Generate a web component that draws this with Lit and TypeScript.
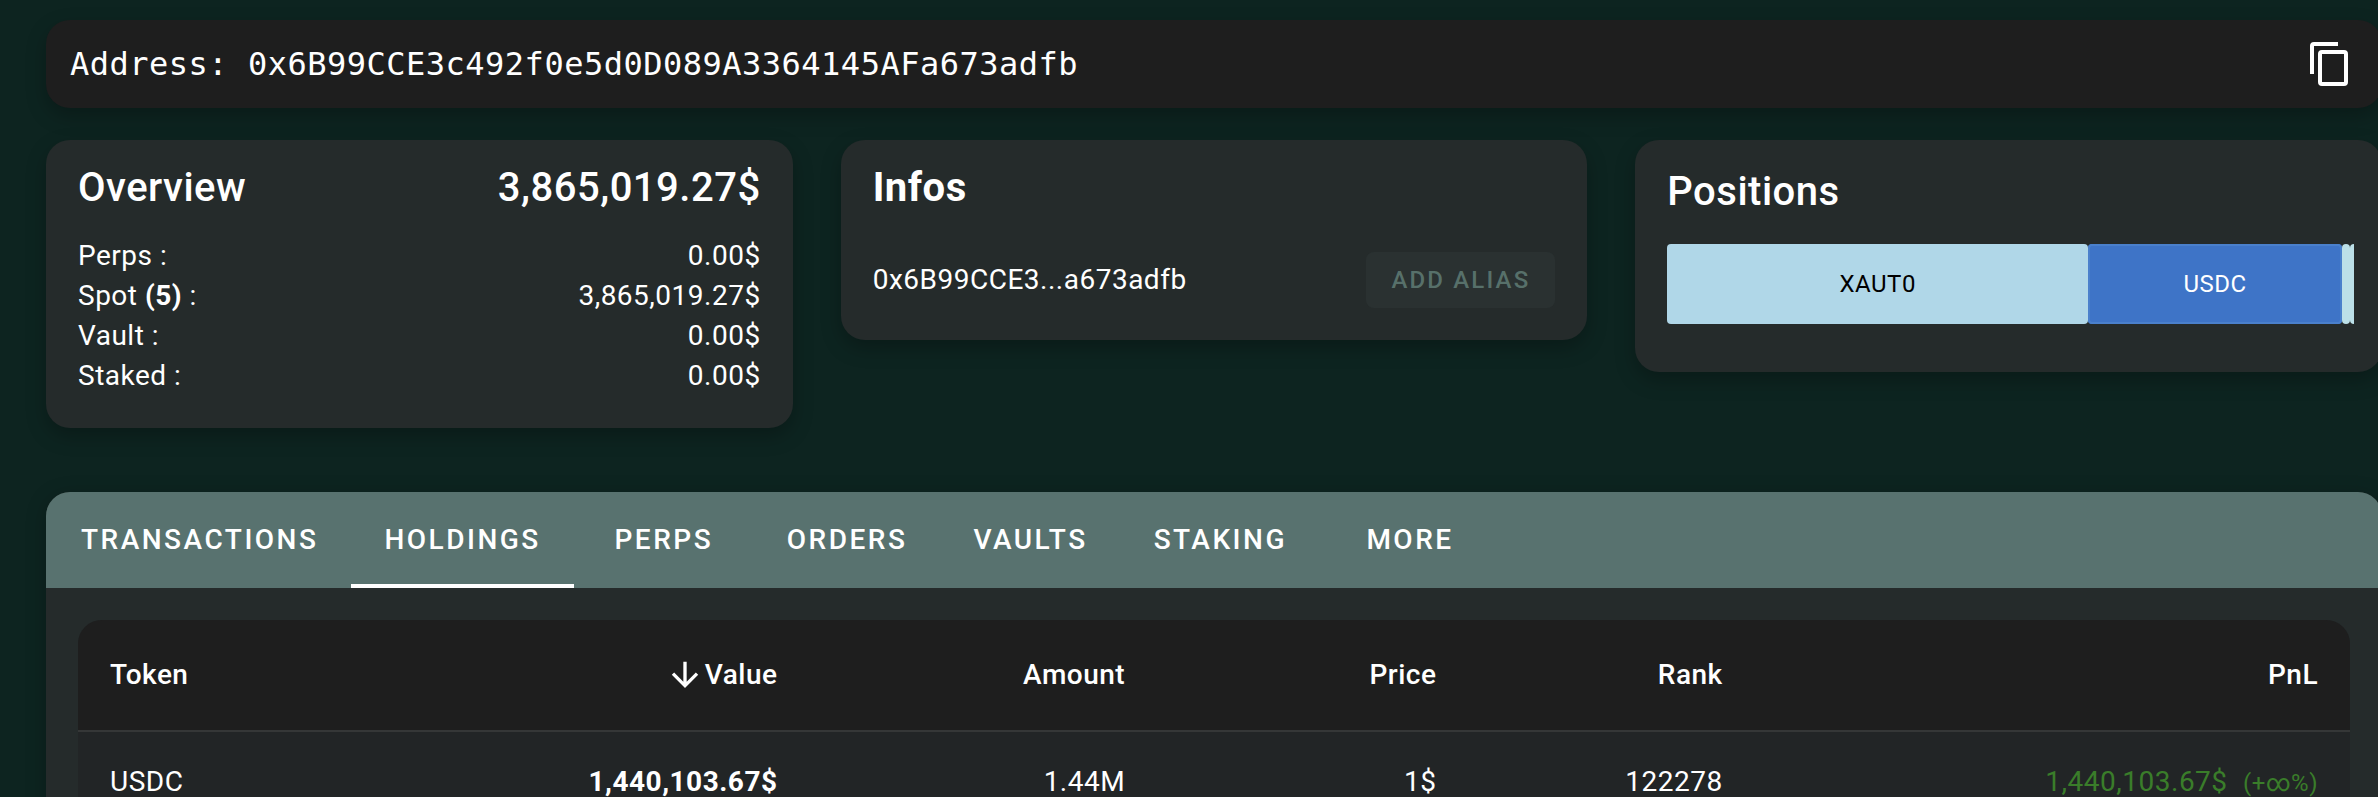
import { LitElement, html, css, svg } from "lit";
import { customElement, state } from "lit/decorators.js";
import { classMap } from "lit/directives/class-map.js";
import { styleMap } from "lit/directives/style-map.js";

const ADDRESS = "0x6B99CCE3c492f0e5d0D089A3364145AFa673adfb";

const TABS = ["Transactions", "Holdings", "Perps", "Orders", "Vaults", "Staking", "More"];

const POSITIONS = [
  { name: "XAUT0", share: 421, tone: "sky" },
  { name: "USDC", share: 254, tone: "blue" },
  { name: "", share: 8, tone: "mint" },
  { name: "", share: 4, tone: "mint last" },
];

const copyIcon = svg`<path d="M19,21H8V7H19M19,5H8A2,2 0 0,0 6,7V21A2,2 0 0,0 8,23H19A2,2 0 0,0 21,21V7A2,2 0 0,0 19,5M16,1H4A2,2 0 0,0 2,3V17H4V3H16V1Z" fill="currentColor"/>`;
const arrowIcon = svg`<path d="M11,4H13V16L18.5,10.5L19.92,11.92L12,19.84L4.08,11.92L5.5,10.5L11,16V4Z" fill="currentColor"/>`;

@customElement("app-root")
export class AppRoot extends LitElement {
  static styles = css`
    :host {
      display: block;
      box-sizing: border-box;
      min-height: 100vh;
      max-height: 100vh;
      overflow: hidden;
      padding: 20px 0 0 46px;
      background: #0d2420;
      color: #fff;
      font-family: Roboto, "Liberation Sans", sans-serif;
      font-size: 28px;
      line-height: 40px;
      letter-spacing: 0.0178571429em;
    }
    * {
      box-sizing: border-box;
    }
    button {
      border: 0;
      margin: 0;
      padding: 0;
      background: none;
      color: inherit;
      font: inherit;
      letter-spacing: inherit;
      cursor: pointer;
    }
    h2 {
      margin: 0;
      font-size: 40px;
      line-height: 64px;
      font-weight: 500;
      letter-spacing: 0.0125em;
    }
    .page {
      margin-right: -4px;
    }
    .address {
      display: flex;
      align-items: center;
      justify-content: space-between;
      height: 88px;
      padding: 0 28px 0 24px;
      border-radius: 24px;
      background: #1e1e1e;
      box-shadow: 0 8px 20px rgba(0, 0, 0, 0.25);
      font-family: "DejaVu Sans Mono", monospace;
      font-size: 32px;
      letter-spacing: 0.015625em;
    }
    .copy {
      display: flex;
    }
    .copy svg {
      width: 48px;
      height: 48px;
    }
    .cards {
      display: grid;
      grid-template-columns: repeat(3, 1fr);
      align-items: start;
      gap: 48px;
      margin: 32px 0 64px;
    }
    .card {
      padding: 16px 32px 32px;
      border-radius: 24px;
      background: #252b2b;
      box-shadow: 0 8px 20px rgba(0, 0, 0, 0.25);
    }
    .head,
    .row {
      display: flex;
      justify-content: space-between;
    }
    .lines {
      margin: 16px 0 0;
    }
    .lines dt,
    .lines dd {
      margin: 0;
    }
    .strong {
      font-weight: 700;
    }
    .alias {
      display: flex;
      align-items: center;
      justify-content: space-between;
      margin-top: 32px;
    }
    .add {
      height: 56px;
      padding: 0 25px;
      border-radius: 8px;
      background: #2a3131;
      color: #57706a;
      font-size: 24px;
      font-weight: 500;
      letter-spacing: 0.0892857143em;
    }
    .positions {
      padding: 20px 28px 48px 32px;
    }
    .bar {
      display: flex;
      height: 80px;
      margin-top: 20px;
    }
    .slice {
      display: flex;
      align-items: center;
      justify-content: center;
      border-radius: 4px;
      font-size: 24px;
      min-width: 0;
    }
    .sky {
      background: #b0d7e8;
      color: #000;
    }
    .blue {
      background: #3e74c7;
      box-shadow: inset 0 0 0 2px #4a80cc;
    }
    .mint {
      background: #bce0e8;
    }
    .last {
      border-radius: 4px 0 0 4px;
    }
    .panel {
      border-radius: 24px 24px 0 0;
      background: #252b2b;
      box-shadow: 0 4px 20px rgba(0, 0, 0, 0.25);
    }
    .tabs {
      display: flex;
      padding-left: 2px;
      height: 96px;
      border-radius: 24px 24px 0 0;
      background: #58726f;
    }
    .tab {
      min-width: 180px;
      padding: 0 33px;
      border-top: 4px solid transparent;
      border-bottom: 4px solid transparent;
      font-weight: 500;
      letter-spacing: 0.0892857143em;
      text-transform: uppercase;
    }
    .tab.active {
      border-bottom-color: #fff;
    }
    .content {
      padding: 32px 32px 0;
    }
    .holdings {
      width: 100%;
      table-layout: fixed;
      border-collapse: separate;
      border-spacing: 0;
      border-radius: 24px 24px 0 0;
      overflow: hidden;
      background: #222526;
      text-align: right;
      font-size: 28px;
    }
    .holdings th {
      height: 112px;
      padding: 0 32px;
      background: #1e1e1e;
      border-bottom: 2px solid #353737;
      font-weight: 500;
    }
    .holdings td {
      height: 100px;
      padding: 0 32px;
    }
    .holdings .first {
      width: 12%;
      text-align: left;
    }
    .value {
      width: 20.2%;
    }
    .amount {
      width: 15.3%;
    }
    .price {
      width: 13.7%;
    }
    .rank {
      width: 12.6%;
    }
    .sort {
      display: inline-flex;
      align-items: center;
      vertical-align: top;
    }
    .sort svg {
      width: 40px;
      height: 40px;
    }
    .gain {
      color: #3a7d2a;
    }
    .percent {
      margin-left: 8px;
      font-size: 24px;
    }
  `;

  @state() private active = "Holdings";

  private copy() {
    navigator.clipboard?.writeText(ADDRESS);
  }

  render() {
    return html`
      <main class="page">
        <div class="address">
          <span>Address: ${ADDRESS}</span>
          <button class="copy" aria-label="Copy address" @click=${this.copy}>
            <svg viewBox="0 0 24 24" aria-hidden="true">${copyIcon}</svg>
          </button>
        </div>

        <div class="cards">
          <section class="card">
            <div class="head">
              <h2>Overview</h2>
              <h2>3,865,019.27$</h2>
            </div>
            <dl class="lines">
              <div class="row"><dt>Perps :</dt><dd>0.00$</dd></div>
              <div class="row"><dt>Spot <span class="strong">(5)</span> :</dt><dd>3,865,019.27$</dd></div>
              <div class="row"><dt>Vault :</dt><dd>0.00$</dd></div>
              <div class="row"><dt>Staked :</dt><dd>0.00$</dd></div>
            </dl>
          </section>

          <section class="card">
            <h2 class="strong">Infos</h2>
            <div class="alias">
              <span>0x6B99CCE3...a673adfb</span>
              <button class="add">ADD ALIAS</button>
            </div>
          </section>

          <section class="card positions">
            <h2>Positions</h2>
            <div class="bar">
              ${POSITIONS.map(
                (p) => html`<div class="slice ${p.tone}" style=${styleMap({ flex: `${p.share} 1 0` })}>${p.name}</div>`
              )}
            </div>
          </section>
        </div>

        <section class="panel">
          <div class="tabs" role="tablist">
            ${TABS.map(
              (t) => html`<button
                role="tab"
                aria-selected=${t === this.active ? "true" : "false"}
                class=${classMap({ tab: true, active: t === this.active })}
                @click=${() => (this.active = t)}
              >${t}</button>`
            )}
          </div>
          <div class="content">
            <table class="holdings">
              <thead>
                <tr>
                  <th class="first">Token</th>
                  <th class="value" aria-sort="descending">
                    <button class="sort">
                      <svg viewBox="0 0 24 24" aria-hidden="true">${arrowIcon}</svg>Value
                    </button>
                  </th>
                  <th class="amount">Amount</th>
                  <th class="price">Price</th>
                  <th class="rank">Rank</th>
                  <th>PnL</th>
                </tr>
              </thead>
              <tbody>
                <tr>
                  <td class="first">USDC</td>
                  <td class="strong">1,440,103.67$</td>
                  <td>1.44M</td>
                  <td>1$</td>
                  <td>122278</td>
                  <td class="gain">1,440,103.67$ <span class="percent">(+∞%)</span></td>
                </tr>
              </tbody>
            </table>
          </div>
        </section>
      </main>
    `;
  }
}
